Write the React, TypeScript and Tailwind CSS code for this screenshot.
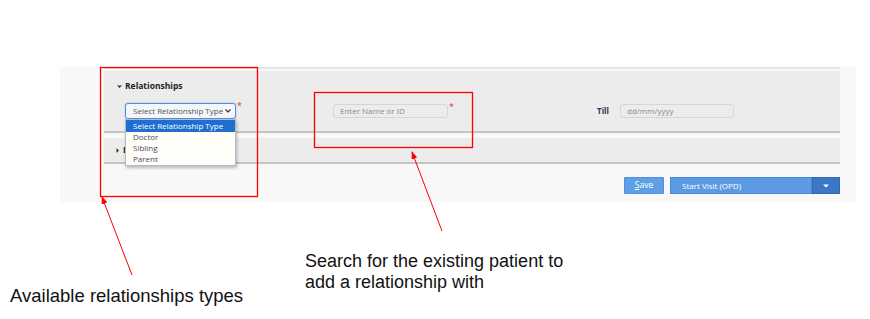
import React from "react";

const Caret = ({ dir = "down" }: { dir?: "down" | "right" }) => (
    <svg width="5" height="5" viewBox="0 0 5 5" className="shrink-0">
        {dir === "down" ? <path d="M0 1.5 L5 1.5 L2.5 4 Z" fill="#333" /> : <path d="M1.5 0 L4 2.5 L1.5 5 Z" fill="#333" />}
    </svg>
);

const Star = () => <span className="self-start -mt-[2px] ml-[1px] text-[9px] leading-none text-[#e33]">*</span>;

export default function App() {
    const options = ["Select Relationship Type", "Doctor", "Sibling", "Parent"];

    return (
        <div className="relative w-[870px] h-[319px] overflow-hidden bg-white" style={{ fontFamily: "'Open Sans', sans-serif" }}>
            <div className="pt-[67px]">
                {/* fond gris du formulaire */}
                <div className="ml-[60px] w-[796px] bg-[#f8f8f8] pl-[44px] pr-[16px] pb-[8px]">
                    <div className="h-[2px] bg-[#e4e4e4]" />

                    {/* Relationships */}
                    <div className="mt-[2px] bg-[#ececec] border-b-2 border-[#c4c4c4] pt-[9px] pb-[12px]">
                        <div className="flex items-center gap-[3px] pl-[13px] h-[12px]">
                            <Caret />
                            <span className="text-[8.5px] font-bold text-[#222]">Relationships</span>
                        </div>
                        <div className="flex items-center mt-[11px] pl-[21px] h-[16px]">
                            <div className="w-[208px] flex items-center">
                                <div className="relative z-10">
                                    <div className="w-[111px] h-[16px] rounded-[3px] border border-[#4d8fe0] bg-[#f4f6fa] shadow-[0_0_2px_#8cb8ee] flex items-center justify-between pl-[7px] pr-[5px]">
                                        <span className="text-[8px] text-[#555] whitespace-nowrap">Select Relationship Type</span>
                                        <svg width="6" height="4" viewBox="0 0 6 4" className="shrink-0 ml-[2px]"><path d="M0.5 0.5 L3 3 L5.5 0.5" stroke="#333" strokeWidth="1.2" fill="none" /></svg>
                                    </div>
                                    <div className="absolute left-0 top-[16px] w-[111px] bg-[#fffdf7] border border-[#bbb] shadow-[1px_2px_3px_rgba(0,0,0,0.25)]">
                                        {options.map((o, i) => (
                                            <div
                                                key={o}
                                                className={`pl-[7px] text-[8px] whitespace-nowrap ${i === 0 ? "bg-[#1f6fd2] text-white h-[12px] leading-[12px]" : "text-[#4b4b6b] h-[11px] leading-[10px]"}`}
                                            >
                                                {o}
                                            </div>
                                        ))}
                                    </div>
                                </div>
                                <Star />
                            </div>
                            <div className="w-[264px] flex items-center">
                                <div className="w-[115px] h-[14px] rounded-[3px] border border-[#d6d6d6] bg-[#ececec] flex items-center pl-[6px]">
                                    <span className="text-[8px] text-[#8a8a8a]">Enter Name or ID</span>
                                </div>
                                <Star />
                            </div>
                            <span className="text-[8px] font-bold text-[#333355] w-[23px]">Till</span>
                            <div className="w-[114px] h-[14px] rounded-[3px] border border-[#d6d6d6] bg-[#ececec] flex items-center pl-[6px]">
                                <span className="text-[8px] text-[#8a8a8a]">dd/mm/yyyy</span>
                            </div>
                        </div>
                    </div>

                    {/* section repliée */}
                    <div className="mt-[5px] h-[26px] bg-[#ececec] border-b-2 border-[#c4c4c4] flex items-center gap-[3px] pl-[11px]">
                        <Caret dir="right" />
                        <span className="w-[6px] overflow-hidden text-[8.5px] font-bold text-[#222]">D</span>
                    </div>

                    {/* boutons */}
                    <div className="mt-[13px] flex justify-end h-[17px]">
                        <button className="w-[40px] h-[17px] bg-[#5f9fe6] border border-[#5590da] text-white text-[8.5px] rounded-[1px]">
                            <span className="underline">S</span>ave
                        </button>
                        <div className="ml-[6px] flex h-[17px]">
                            <button className="w-[142px] h-[17px] bg-[#5c9be4] border border-[#4a88d6] text-white text-[8px] text-left pl-[11px]">
                                Start Visit (OPD)
                            </button>
                            <button className="w-[28px] h-[17px] bg-[#3c77c5] border border-[#3468b0] flex items-center justify-center">
                                <svg width="6" height="4" viewBox="0 0 6 4"><path d="M0 0.5 L6 0.5 L3 3.5 Z" fill="#fff" /></svg>
                            </button>
                        </div>
                    </div>
                </div>

                {/* annotations */}
                <div className="flex items-start text-[18px] text-[#111]" style={{ fontFamily: "'Liberation Sans', Arial, sans-serif" }}>
                    <div className="w-[305px] pl-[10px] mt-[83px] leading-[21px] text-[18.5px]">Available relationships types</div>
                    <div className="mt-[49px] leading-[21px]">
                        Search for the existing patient to
                        <br />
                        add a relationship with
                    </div>
                </div>
            </div>

            <svg className="absolute inset-0 pointer-events-none" width="870" height="319">
                <defs>
                    <marker id="ah" markerWidth="8" markerHeight="6" refX="7" refY="3" orient="auto" markerUnits="userSpaceOnUse">
                        <path d="M0 0 L8 3 L0 6 Z" fill="#f00" />
                    </marker>
                </defs>
                <rect x="100.5" y="67.5" width="157" height="129" fill="none" stroke="#f00" strokeWidth="1.3" />
                <rect x="314.5" y="92.5" width="158" height="55" fill="none" stroke="#f00" strokeWidth="1.3" />
                <line x1="132" y1="275" x2="102" y2="197" stroke="#f00" strokeWidth="1" markerEnd="url(#ah)" />
                <line x1="442" y1="231" x2="412" y2="152" stroke="#f00" strokeWidth="1" markerEnd="url(#ah)" />
            </svg>
        </div>
    );
}
